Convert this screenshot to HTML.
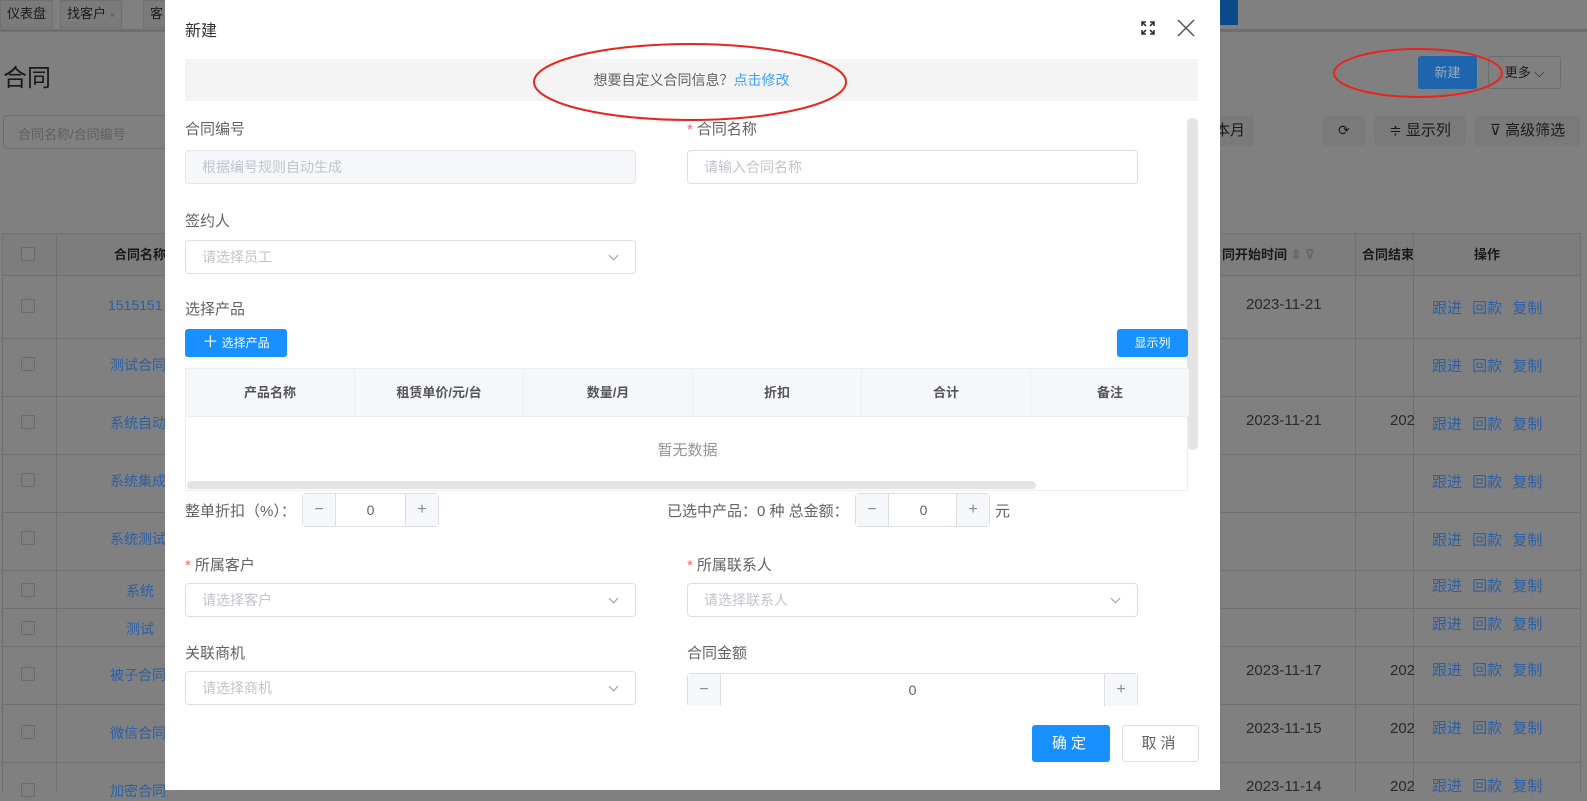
<!DOCTYPE html>
<html><head><meta charset="utf-8"><style>
*{box-sizing:border-box;margin:0;padding:0}
body{width:1587px;height:790px;overflow:hidden;position:relative;background:#808080;font-family:"Liberation Sans","Noto Sans CJK SC",sans-serif;font-size:14px;color:#606266}
.a{position:absolute}
.tab{position:absolute;top:0;height:28px;border:1px solid #707070;background:#7b7b7b;font-size:13px;color:#1a1a1a;line-height:26px;padding:0 6px}
.bl{color:#2b5fa6}
.hl{position:absolute;height:1px;background:#707070}
.vl{position:absolute;width:1px;background:#707070}
.cb{position:absolute;left:21px;width:14px;height:14px;border:1px solid #6a6a6a;background:#808080;border-radius:2px}
.dk{color:#1a1a1a}
.modal{position:absolute;left:165px;top:0;width:1055px;height:790px;background:#fff;overflow:hidden;z-index:60}
.lbl{position:absolute;font-size:15px;color:#606266}
.req{color:#f56c6c;margin-right:4px}
.inp{position:absolute;height:34px;border:1px solid #dcdfe6;border-radius:4px;background:#fff;font-size:14px;color:#c0c4cc;padding-left:16px;line-height:32px}
.arr{position:absolute;right:18px;top:11px;width:7px;height:7px;border-right:1px solid #999;border-bottom:1px solid #999;transform:rotate(45deg)}
.step{position:absolute;height:34px;border:1px solid #dcdfe6;border-radius:4px;background:#fff}
.sb{position:absolute;top:0;height:32px;width:33px;background:#f5f7fa;color:#888;text-align:center;line-height:31px;font-size:16px}
.th{position:absolute;top:0;height:48px;line-height:48px;text-align:center;font-size:13px;font-weight:bold;color:#555;border-right:1px solid #ebeef5}
.btn{position:absolute;border-radius:3px;text-align:center;color:#fff;background:#1890ff;font-size:12px}
.op{position:absolute;left:1432px;word-spacing:6px;font-size:15px;color:#2b5fa6}
.d{position:absolute;color:#2a2a2a;font-size:15px}
</style></head><body>
<div class="a" style="left:0;top:29px;width:1587px;height:3px;background:#6e6e6e"></div>
<div class="tab" style="left:0;">仪表盘</div>
<div class="tab" style="left:60px;">找客户 <span style="font-size:9px;color:#555">×</span></div>
<div class="tab" style="left:143px;width:30px">客</div>
<div class="a" style="left:1200px;top:0;width:38px;height:25px;background:#0b4a8a"></div>
<div class="a dk" style="left:3px;top:58px;font-size:24px">合同</div>
<div class="a" style="left:3px;top:115px;width:180px;height:34px;border:1px solid #6e6e6e;border-radius:4px;font-size:13px;color:#606060;padding:8px 14px">合同名称/合同编号</div>
<div class="a" style="left:1418px;top:56px;width:59px;height:33px;background:#1e65ad;border-radius:3px;color:#9ab;font-size:13px;text-align:center;line-height:33px">新建</div>
<div class="a dk" style="left:1488px;top:56px;width:73px;height:33px;border:1px solid #6e6e6e;border-radius:3px;font-size:13px;text-align:center;line-height:31px">更多 ⌵</div>
<div class="a dk" style="left:1215px;top:116px;width:39px;height:30px;background:#7a7a7a;border-radius:3px;font-size:15px;line-height:30px">本月</div>
<div class="a dk" style="left:1323px;top:116px;width:42px;height:30px;background:#7a7a7a;border-radius:3px;text-align:center;line-height:28px">⟳</div>
<div class="a dk" style="left:1374px;top:116px;width:92px;height:30px;background:#7a7a7a;border-radius:3px;text-align:center;line-height:30px;font-size:15px">≑ 显示列</div>
<div class="a dk" style="left:1475px;top:116px;width:105px;height:30px;background:#7a7a7a;border-radius:3px;text-align:center;line-height:30px;font-size:15px">⊽ 高级筛选</div>
<div class="a" style="left:2px;top:233px;width:1578px;height:42px;background:#7d7d7d;border-top:1px solid #707070"></div>
<div class="cb" style="top:247px"></div>
<div class="a dk" style="left:114px;top:244px;font-size:13px;font-weight:bold">合同名称</div>
<div class="a dk" style="left:1222px;top:244px;font-size:13px;font-weight:bold">同开始时间 <span style="color:#666">⇕ ⊽</span></div>
<div class="a dk" style="left:1362px;top:244px;font-size:13px;font-weight:bold">合同结束</div>
<div class="a dk" style="left:1474px;top:244px;font-size:13px;font-weight:bold">操作</div>
<div class="vl" style="left:2px;top:233px;height:560px"></div>
<div class="vl" style="left:56px;top:233px;height:560px"></div>
<div class="vl" style="left:1355px;top:233px;height:560px"></div>
<div class="vl" style="left:1413px;top:233px;height:560px"></div>
<div class="vl" style="left:1580px;top:233px;height:560px"></div>
<div class="hl" style="left:2px;top:275px;width:1578px"></div>
<div class="hl" style="left:2px;top:338px;width:1578px"></div>
<div class="hl" style="left:2px;top:396px;width:1578px"></div>
<div class="hl" style="left:2px;top:454px;width:1578px"></div>
<div class="hl" style="left:2px;top:512px;width:1578px"></div>
<div class="hl" style="left:2px;top:570px;width:1578px"></div>
<div class="hl" style="left:2px;top:608px;width:1578px"></div>
<div class="hl" style="left:2px;top:646px;width:1578px"></div>
<div class="hl" style="left:2px;top:704px;width:1578px"></div>
<div class="hl" style="left:2px;top:762px;width:1578px"></div>
<div class="cb" style="top:299px"></div><div class="a bl" style="left:108px;top:297px">1515151</div>
<div class="cb" style="top:357px"></div><div class="a bl" style="left:110px;top:355px">测试合同</div>
<div class="cb" style="top:415px"></div><div class="a bl" style="left:110px;top:413px">系统自动</div>
<div class="cb" style="top:473px"></div><div class="a bl" style="left:110px;top:471px">系统集成</div>
<div class="cb" style="top:531px"></div><div class="a bl" style="left:110px;top:529px">系统测试</div>
<div class="cb" style="top:583px"></div><div class="a bl" style="left:126px;top:581px">系统</div>
<div class="cb" style="top:621px"></div><div class="a bl" style="left:126px;top:619px">测试</div>
<div class="cb" style="top:667px"></div><div class="a bl" style="left:110px;top:665px">被子合同</div>
<div class="cb" style="top:725px"></div><div class="a bl" style="left:110px;top:723px">微信合同</div>
<div class="cb" style="top:783px"></div><div class="a bl" style="left:110px;top:781px">加密合同</div>
<div class="d" style="left:1246px;top:296px">2023-11-21</div>
<div class="d" style="left:1246px;top:412px">2023-11-21</div><div class="d" style="left:1390px;top:412px">202</div>
<div class="d" style="left:1246px;top:662px">2023-11-17</div><div class="d" style="left:1390px;top:662px">202</div>
<div class="d" style="left:1246px;top:720px">2023-11-15</div><div class="d" style="left:1390px;top:720px">202</div>
<div class="d" style="left:1246px;top:778px">2023-11-14</div><div class="d" style="left:1390px;top:778px">202</div>
<div class="op" style="top:297px">跟进 回款 复制</div>
<div class="op" style="top:355px">跟进 回款 复制</div>
<div class="op" style="top:413px">跟进 回款 复制</div>
<div class="op" style="top:471px">跟进 回款 复制</div>
<div class="op" style="top:529px">跟进 回款 复制</div>
<div class="op" style="top:575px">跟进 回款 复制</div>
<div class="op" style="top:613px">跟进 回款 复制</div>
<div class="op" style="top:659px">跟进 回款 复制</div>
<div class="op" style="top:717px">跟进 回款 复制</div>
<div class="op" style="top:775px">跟进 回款 复制</div>

<div class="modal">
 <div class="a" style="left:20px;top:17px;font-size:16px;color:#303133">新建</div>
 <svg class="a" style="left:975px;top:20px" width="16" height="16" viewBox="0 0 16 16" fill="none" stroke="#333" stroke-width="1.6"><path d="M2 6V2h4M2 2l4 4M14 6V2h-4M14 2l-4 4M2 10v4h4M2 14l4-4M14 10v4h-4M14 14l-4-4"/></svg>
 <svg class="a" style="left:1012px;top:19px" width="18" height="18" viewBox="0 0 18 18" stroke="#555" stroke-width="1.5"><path d="M1 1L17 17M17 1L1 17"/></svg>
 <div class="a" style="left:20px;top:59px;width:1013px;height:42px;background:#f4f4f5;text-align:center;line-height:42px;font-size:14px;color:#606266">想要自定义合同信息？<span style="color:#409eff">点击修改</span></div>
 <div class="a" style="left:1022px;top:118px;width:11px;height:332px;background:#e4e4e4;border-radius:5px"></div>

 <div class="lbl" style="left:20px;top:118px">合同编号</div>
 <div class="inp" style="left:20px;top:150px;width:451px;background:#f5f7fa;border-color:#e4e7ed">根据编号规则自动生成</div>
 <div class="lbl" style="left:522px;top:118px"><span class="req">*</span>合同名称</div>
 <div class="inp" style="left:522px;top:150px;width:451px">请输入合同名称</div>

 <div class="lbl" style="left:20px;top:210px">签约人</div>
 <div class="inp" style="left:20px;top:240px;width:451px">请选择员工<i class="arr"></i></div>

 <div class="lbl" style="left:20px;top:298px">选择产品</div>
 <div class="btn" style="left:20px;top:329px;width:102px;height:28px;line-height:28px"><span style="font-size:16px">＋</span> 选择产品</div>
 <div class="btn" style="left:952px;top:329px;width:71px;height:28px;line-height:28px">显示列</div>
 <div class="a" style="left:20px;top:368px;width:1003px;height:123px;border:1px solid #ebeef5">
  <div class="a" style="left:0;top:0;width:1003px;height:48px;background:#f5f7fa;border-bottom:1px solid #ebeef5"></div>
  <div class="th" style="left:0;width:169px">产品名称</div>
  <div class="th" style="left:169px;width:169px">租赁单价/元/台</div>
  <div class="th" style="left:338px;width:169px">数量/月</div>
  <div class="th" style="left:507px;width:169px">折扣</div>
  <div class="th" style="left:676px;width:169px">合计</div>
  <div class="th" style="left:845px;width:158px;border:0">备注</div>
  <div class="a" style="left:0;top:70px;width:1003px;text-align:center;color:#909399;font-size:15px">暂无数据</div>
  <div class="a" style="left:1px;top:112px;width:849px;height:8px;background:#e4e4e4;border-radius:4px"></div>
 </div>

 <div class="lbl" style="left:20px;top:500px">整单折扣（%）：</div>
 <div class="step" style="left:137px;top:493px;width:137px"><div class="sb" style="left:0;border-right:1px solid #dcdfe6">−</div><div class="a" style="left:33px;width:69px;top:0;line-height:32px;text-align:center;color:#606266">0</div><div class="sb" style="right:0;border-left:1px solid #dcdfe6">+</div></div>
 <div class="lbl" style="left:502px;top:500px">已选中产品：0 种 总金额：</div>
 <div class="step" style="left:690px;top:493px;width:135px"><div class="sb" style="left:0;border-right:1px solid #dcdfe6">−</div><div class="a" style="left:33px;width:69px;top:0;line-height:32px;text-align:center;color:#606266">0</div><div class="sb" style="right:0;border-left:1px solid #dcdfe6">+</div></div>
 <div class="lbl" style="left:830px;top:500px">元</div>

 <div class="lbl" style="left:20px;top:554px"><span class="req">*</span>所属客户</div>
 <div class="inp" style="left:20px;top:583px;width:451px">请选择客户<i class="arr"></i></div>
 <div class="lbl" style="left:522px;top:554px"><span class="req">*</span>所属联系人</div>
 <div class="inp" style="left:522px;top:583px;width:451px">请选择联系人<i class="arr"></i></div>

 <div class="lbl" style="left:20px;top:642px">关联商机</div>
 <div class="lbl" style="left:522px;top:642px">合同金额</div>
 <div class="a" style="left:0;top:671px;width:1055px;height:35px;overflow:hidden">
  <div class="inp" style="left:20px;top:0;width:451px">请选择商机<i class="arr"></i></div>
  <div class="step" style="left:522px;top:2px;width:451px"><div class="sb" style="left:0;border-right:1px solid #dcdfe6">−</div><div class="a" style="left:33px;width:383px;top:0;line-height:32px;text-align:center;color:#606266">0</div><div class="sb" style="right:0;border-left:1px solid #dcdfe6">+</div></div>
 </div>

 <div class="btn" style="left:867px;top:725px;width:78px;height:37px;line-height:37px;font-size:15px;letter-spacing:4px">确定</div>
 <div class="a" style="left:957px;top:725px;width:77px;height:37px;line-height:35px;border:1px solid #dcdfe6;border-radius:3px;text-align:center;color:#606266;font-size:15px;letter-spacing:4px">取消</div>
</div>

<svg class="a" style="left:0;top:0;z-index:70" width="1587" height="790" fill="none" stroke="#e8251c" stroke-width="2">
 <ellipse cx="690" cy="82" rx="156" ry="38"/>
 <ellipse cx="1418" cy="73" rx="84" ry="24"/>
</svg>
</body></html>
